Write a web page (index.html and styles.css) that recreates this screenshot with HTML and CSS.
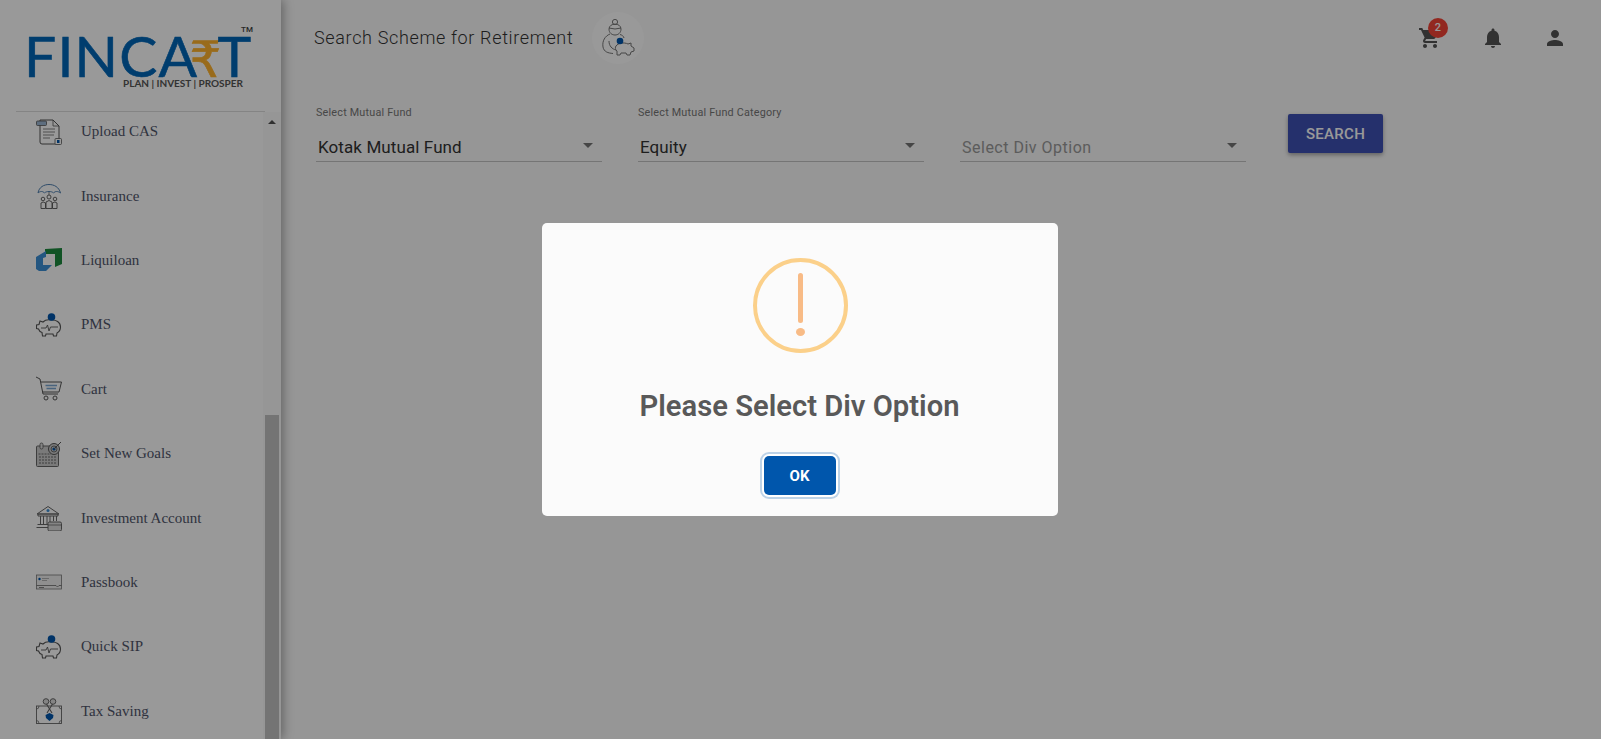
FILE: index.html
```html
<!DOCTYPE html>
<html>
<head>
  <title>Search Scheme for Retirement</title>
  <link rel="stylesheet" href="styles.css">
</head>
<body>
  <svg class="defs" width="0" height="0">
    <symbol id="piggy" viewBox="0 0 26 26">
      <path d="M4 9 L7 10 C9 8 12 7.500 15 8 C20 7.500 24.500 10 24.500 15 C24.500 18 23 20 21 21 L20.500 24 H17.500 L17 22 H10 L9.500 24 H6.500 L6 20.500 C4 20 3 18.500 2.500 17 L0.500 16.500 V13 L3 12.500 Z" fill="none" stroke="#555" stroke-width="1.100"/>
      <path d="M5 16 H10 L11.500 13 L13 19 L14.500 15 H22" fill="none" stroke="#555" stroke-width=".9"/>
      <circle cx="15.500" cy="5" r="3.800" fill="#0056ac"/>
    </symbol>
  </svg>

  <aside class="sidebar">
    <div class="logo">
      <div class="logo-word">FINCA<span class="rupee">₹</span>T</div>
      <span class="tm">TM</span>
      <div class="logo-tag">PLAN | INVEST | PROSPER</div>
    </div>
    <div class="divider"></div>
    <div class="side-body">
      <nav class="menu">
        <a class="menu-item">
          <svg class="menu-icon" viewBox="0 0 26 26">
            <path d="M4 1 H17 L23 7 V21 M20 25 H6 Q4 25 4 23 V1" fill="none" stroke="#555" stroke-width="1"/>
            <path d="M17 1 V7 H23" fill="none" stroke="#555" stroke-width=".8"/>
            <rect x="0.500" y="2" width="10" height="4.500" rx="1" fill="#9db8d4" stroke="#555" stroke-width=".8"/>
            <path d="M7 10 H19 M7 13 H19 M7 16 H18 M7 19 H14" stroke="#777" stroke-width=".9"/>
            <rect x="19" y="19.500" width="6.500" height="6" rx="1" fill="#fff" stroke="#555" stroke-width=".8"/>
            <rect x="21" y="21" width="2.500" height="3" fill="#0056ac"/>
          </svg>
          <span>Upload CAS</span>
        </a>
        <a class="menu-item">
          <svg class="menu-icon" viewBox="0 0 26 26">
            <path d="M2 10 C3 4 8 1.500 13 1.500 C18 1.500 23 4 24.500 10 C22 8 19 8 17.500 10 C16 8 10 8 8.500 10 C7 8 4 8 2 10 Z" fill="none" stroke="#4f7fb0" stroke-width="1"/>
            <path d="M13 9 V12" stroke="#666" stroke-width=".8"/>
            <circle cx="13" cy="14" r="2" fill="none" stroke="#555" stroke-width=".9"/>
            <circle cx="7" cy="16" r="1.800" fill="none" stroke="#555" stroke-width=".9"/>
            <circle cx="19" cy="16" r="1.800" fill="none" stroke="#555" stroke-width=".9"/>
            <path d="M10 25.500 V19 Q13 16 16 19 V25.500 Z M5 25.500 V20 Q7 18 9.500 20 V25.500 Z M16.500 25.500 V20 Q19 18 21 20 V25.500 Z" fill="none" stroke="#555" stroke-width=".9"/>
          </svg>
          <span>Insurance</span>
        </a>
        <a class="menu-item">
          <svg class="menu-icon" viewBox="0 0 26 26">
            <path d="M9 2 L26 1 V17 L19 20 V7 H9 Z" fill="#1d8a3e"/>
            <path d="M0 10 L10 4 V10 L7 11 V18 H16 L10 24 H3 L0 22 Z" fill="#3c8fd6"/>
          </svg>
          <span>Liquiloan</span>
        </a>
        <a class="menu-item">
          <svg class="menu-icon"><use href="#piggy"/></svg>
          <span>PMS</span>
        </a>
        <a class="menu-item">
          <svg class="menu-icon" viewBox="0 0 26 26">
            <path d="M0 1 L4 3 L7 18 H22 M5 6 H25.500 L23 16 H6.500" fill="none" stroke="#555" stroke-width="1"/>
            <path d="M9.500 9.500 H21 M10.500 12.500 H20" stroke="#7aa5d0" stroke-width="1.300"/>
            <circle cx="10" cy="22" r="2" fill="none" stroke="#555"/>
            <circle cx="19" cy="22" r="2" fill="none" stroke="#555"/>
          </svg>
          <span>Cart</span>
        </a>
        <a class="menu-item">
          <svg class="menu-icon" viewBox="0 0 26 26">
            <rect x="0.500" y="5" width="22" height="20.500" rx="1" fill="#ccc" stroke="#666"/>
            <path d="M2.500 13 H15 M3 16 H20 M3 19 H20 M3 22 H20" stroke="#666" stroke-width="1.200" stroke-dasharray="2 1"/>
            <rect x="4" y="2" width="3" height="6" rx="1.500" fill="#ddd" stroke="#555" stroke-width=".8"/>
            <circle cx="18" cy="8" r="5.500" fill="#ccc" stroke="#555"/>
            <circle cx="18" cy="8" r="3" fill="none" stroke="#555" stroke-width=".8"/>
            <circle cx="18" cy="8" r="1.600" fill="#0056ac"/>
            <path d="M18 8 L25 1" stroke="#555"/>
          </svg>
          <span>Set New Goals</span>
        </a>
        <a class="menu-item">
          <svg class="menu-icon" viewBox="0 0 26 26">
            <path d="M1 9 L12 1.500 L23 9 Z M2 9 H22 V11 H2 Z" fill="none" stroke="#666"/>
            <circle cx="12" cy="5.500" r="1.500" fill="#3c8fd6"/>
            <path d="M4.500 11 V19 M7.500 11 V19 M11 11 V19 M14 11 V19 M17.500 11 V16 M20.500 11 V16" stroke="#666"/>
            <path d="M1.500 19.500 H12 M0.500 22.500 H12" stroke="#666"/>
            <rect x="12" y="17" width="13.500" height="9" rx="1.500" fill="#ddd" stroke="#666"/>
            <path d="M12 20 H25.500" stroke="#666" stroke-width=".8"/>
          </svg>
          <span>Investment Account</span>
        </a>
        <a class="menu-item">
          <svg class="menu-icon" viewBox="0 0 26 26">
            <rect x="0.500" y="6" width="25" height="14" fill="#eee" stroke="#777" stroke-width=".8"/>
            <circle cx="3.500" cy="10" r="1.200" fill="#0056ac"/>
            <path d="M6 9.500 H13 M6 11.500 H11" stroke="#888" stroke-width=".6"/>
            <path d="M0.500 16.500 H20 L21.500 18 L23 16.500 H25.500 M3 18.500 H8" fill="none" stroke="#666" stroke-width=".8"/>
          </svg>
          <span>Passbook</span>
        </a>
        <a class="menu-item">
          <svg class="menu-icon"><use href="#piggy"/></svg>
          <span>Quick SIP</span>
        </a>
        <a class="menu-item">
          <svg class="menu-icon" viewBox="0 0 26 26">
            <rect x="0.500" y="8" width="25" height="17.500" fill="none" stroke="#666" stroke-width=".9"/>
            <path d="M0.500 11 Q3 11 3 8 M25.500 11 Q23 11 23 8 M0.500 22.500 Q3 22.500 3 25.500 M25.500 22.500 Q23 22.500 23 25.500" fill="none" stroke="#666" stroke-width=".8"/>
            <circle cx="10" cy="3.500" r="2.800" fill="#ddd" stroke="#666"/>
            <circle cx="17" cy="3.500" r="2.800" fill="#ddd" stroke="#666"/>
            <path d="M10.500 6 L16 15 M16.500 6 L11 15" stroke="#666" stroke-width="1.100"/>
            <path d="M9.500 17 L13.500 15 L17.500 17 L17 20 L13.500 23 L10 20 Z" fill="#0056ac"/>
          </svg>
          <span>Tax Saving</span>
        </a>
      </nav>
      <div class="scrollbar">
        <span class="scroll-up"></span>
        <div class="scroll-thumb"></div>
      </div>
    </div>
  </aside>

  <main class="content">
    <header class="topbar">
      <h1 class="page-title">Search Scheme for Retirement</h1>
      <div class="goal-badge">
        <svg width="34" height="38" viewBox="0 0 34 38">
          <circle cx="14" cy="3" r="2.600" fill="none" stroke="#777" stroke-width="1"/>
          <path d="M8 10 C8 3.500 20 3.500 20 10 C20 14 17 16 14 16 C11 16 8 14 8 10 Z M8 9 Q14 11 20 9" fill="none" stroke="#777" stroke-width="1"/>
          <path d="M9 15 C4 17 1 22 2 28 C3 33 7 34 12 34.500 M8 22 C8 27 11 30 15 31 M19 15.500 C21 16 22.500 17 23 19" fill="none" stroke="#777" stroke-width="1"/>
          <path d="M15 27 C17 24 23 23 27 25 L30 24 V27 L33 29 V32 L30 33 L29 36 H26 L25 34 H20 L19 36 H16 L16 32 C14 31 14 28 15 27 Z" fill="none" stroke="#777" stroke-width="1"/>
          <circle cx="19" cy="22" r="3.300" fill="#0056ac"/>
        </svg>
      </div>
      <div class="top-actions">
        <div class="cart-wrap">
          <svg class="top-icon" viewBox="0 0 24 24"><path d="M7 18c-1.100 0-1.990.9-1.990 2S5.900 22 7 22s2-.9 2-2-.9-2-2-2zM1 2v2h2l3.600 7.590-1.350 2.450c-.16.280-.25.610-.25.960 0 1.100.9 2 2 2h12v-2H7.420c-.14 0-.25-.11-.25-.25l.03-.12.9-1.630h7.450c.75 0 1.410-.41 1.750-1.030l3.580-6.490c.08-.14.120-.31.120-.48 0-.55-.45-1-1-1H5.210l-.94-2H1zm16 16c-1.100 0-1.990.9-1.990 2s.89 2 1.990 2 2-.9 2-2-.9-2-2-2z"/></svg>
          <span class="badge">2</span>
        </div>
        <svg class="top-icon" viewBox="0 0 24 24"><path d="M12 22c1.100 0 2-.9 2-2h-4c0 1.100.89 2 2 2zm6-6v-5c0-3.070-1.640-5.640-4.500-6.320V4c0-.83-.67-1.500-1.500-1.500s-1.500.67-1.500 1.500v.68C7.630 5.360 6 7.920 6 11v5l-2 2v1h16v-1l-2-2z"/></svg>
        <svg class="top-icon" viewBox="0 0 24 24"><path d="M12 12c2.210 0 4-1.790 4-4s-1.790-4-4-4-4 1.790-4 4 1.790 4 4 4zm0 2c-2.670 0-8 1.340-8 4v2h16v-2c0-2.660-5.330-4-8-4z"/></svg>
      </div>
    </header>

    <section class="filters">
      <div class="field">
        <label class="field-label">Select Mutual Fund</label>
        <div class="select"><span>Kotak Mutual Fund</span><i class="caret"></i></div>
      </div>
      <div class="field">
        <label class="field-label">Select Mutual Fund Category</label>
        <div class="select"><span>Equity</span><i class="caret"></i></div>
      </div>
      <div class="field">
        <label class="field-label"></label>
        <div class="select placeholder"><span>Select Div Option</span><i class="caret"></i></div>
      </div>
      <button class="search-btn">SEARCH</button>
    </section>
  </main>

  <div class="overlay">
    <div class="modal">
      <div class="warn-icon"><span class="warn-line"></span><span class="warn-dot"></span></div>
      <h2 class="modal-title">Please Select Div Option</h2>
      <button class="ok-btn">OK</button>
    </div>
  </div>
</body>
</html>
```

FILE: styles.css
```css
* {
  box-sizing: border-box;
}
html, body {
  margin: 0;
  height: 100%;
  overflow: hidden;
}
body {
  display: flex;
  font-family: Roboto, sans-serif;
  background-color: #fafafa;
}
.defs {
  position: absolute;
}

/* sidebar */
.sidebar {
  width: 281px;
  height: 100vh;
  flex-shrink: 0;
  display: flex;
  flex-direction: column;
  background: #fff;
  box-shadow: 2px 0 10px rgba(0, 0, 0, 0.35);
  position: relative;
}
.logo {
  height: 111px;
  padding: 34px 0 0 24px;
  position: relative;
}
.logo-word {
  font-family: Lato, sans-serif;
  font-size: 57px;
  line-height: 42px;
  letter-spacing: 1.200px;
  color: #0067b8;
  -webkit-text-stroke: 0.6px #0067b8;
  white-space: nowrap;
}
.rupee {
  font-family: "DejaVu Sans", sans-serif;
  font-size: 50px;
  line-height: 0;
  color: #ffb32e;
  -webkit-text-stroke: 0.6px #ffb32e;
  margin: 0 -5px 0 -9px;
}
.tm {
  position: absolute;
  left: 241px;
  top: 25px;
  font-size: 8px;
  font-weight: 500;
  line-height: 10px;
  color: #444;
}
.logo-tag {
  margin: 1px 0 0 99px;
  font-family: Lato, sans-serif;
  font-size: 10px;
  font-weight: 700;
  line-height: 12px;
  color: #555;
  white-space: nowrap;
}
.divider {
  height: 1px;
  margin: 0 16px;
  background: #ddd;
}
.side-body {
  flex: 1;
  display: flex;
  min-height: 0;
}
.menu {
  flex: 1;
  overflow: hidden;
  padding: 0 0 0 36px;
}
.menu-item {
  display: flex;
  align-items: center;
  gap: 19px;
  height: 64.400px;
  font-family: "Liberation Serif", serif;
  font-size: 15px;
  color: #50556a;
}
.menu-item:first-child {
  margin-top: -12.500px;
}
.menu-icon {
  width: 26px;
  height: 26px;
  flex-shrink: 0;
}
.scrollbar {
  width: 18px;
  flex-shrink: 0;
  padding: 0 2px;
  background: #fbfbfb;
  display: flex;
  flex-direction: column;
  align-items: center;
  justify-content: space-between;
  overflow: hidden;
}
.scroll-up {
  margin-top: 8px;
  border-left: 4px solid transparent;
  border-right: 4px solid transparent;
  border-bottom: 4px solid #505050;
}
.scroll-thumb {
  width: 14px;
  height: 324px;
  background: #c1c1c1;
  flex-shrink: 0;
}

/* main area */
.content {
  flex: 1;
  min-width: 0;
}
.topbar {
  height: 76px;
  display: flex;
  align-items: center;
  padding: 0 34px 0 33px;
}
.page-title {
  margin: 0 0 2px;
  font-size: 18px;
  font-weight: 300;
  letter-spacing: 0.650px;
  color: #333;
}
.goal-badge {
  width: 52px;
  height: 52px;
  margin-left: 19px;
  border-radius: 50%;
  background: #fff;
  display: flex;
  align-items: center;
  justify-content: center;
}
.top-actions {
  margin-left: auto;
  display: flex;
  align-items: center;
  gap: 38px;
}
.top-icon {
  display: block;
  width: 24px;
  height: 24px;
  fill: #545454;
}
.cart-wrap {
  position: relative;
  margin-right: 1px;
}
.badge {
  position: absolute;
  top: -8px;
  left: 10px;
  width: 20px;
  height: 20px;
  border-radius: 50%;
  background: #f44336;
  color: #fff;
  font-size: 11px;
  font-weight: 500;
  line-height: 20px;
  text-align: center;
}
.filters {
  display: flex;
  align-items: flex-start;
  gap: 36px;
  padding: 30px 0 0 35px;
}
.field {
  width: 286px;
}
.field-label {
  display: block;
  height: 14px;
  font-size: 10.800px;
  line-height: 14px;
  letter-spacing: 0.200px;
  color: #777;
}
.select {
  height: 30px;
  margin-top: 12px;
  padding: 1px 9px 0 2px;
  display: flex;
  align-items: center;
  justify-content: space-between;
  border-bottom: 1px solid #c4c4c4;
  font-size: 17px;
  letter-spacing: 0.100px;
  color: #333;
}
.placeholder {
  font-size: 16px;
  letter-spacing: 0.500px;
  color: #999;
}
.caret {
  width: 0;
  height: 0;
  margin-top: -3px;
  border-left: 5px solid transparent;
  border-right: 5px solid transparent;
  border-top: 5px solid #757575;
}
.search-btn {
  height: 39px;
  width: 95px;
  margin: 8px 0 0 6px;
  border: 0;
  border-radius: 2px;
  background: #3f51b5;
  color: #fff;
  font-family: Roboto, sans-serif;
  font-size: 15px;
  font-weight: 500;
  letter-spacing: 0.300px;
  box-shadow: 0 2px 4px rgba(0, 0, 0, 0.35);
}

/* alert */
.overlay {
  position: fixed;
  inset: 0;
  padding-right: 2px;
  background: rgba(0, 0, 0, 0.4);
  display: flex;
  align-items: center;
  justify-content: center;
}
.modal {
  width: 516px;
  height: 293px;
  padding-top: 35px;
  border-radius: 5px;
  background: #fbfbfb;
  display: flex;
  flex-direction: column;
  align-items: center;
}
.warn-icon {
  width: 95px;
  height: 95px;
  margin-left: 2px;
  border: 4px solid #fbd08a;
  border-radius: 50%;
  display: flex;
  flex-direction: column;
  align-items: center;
  padding-top: 11px;
}
.warn-line {
  width: 5px;
  height: 50px;
  border-radius: 3px;
  background: #f8bb86;
}
.warn-dot {
  width: 9px;
  height: 8px;
  margin-top: 5px;
  border-radius: 50%;
  background: #f8bb86;
}
.modal-title {
  margin: 33px 0 0;
  font-size: 29.200px;
  font-weight: 600;
  line-height: 40px;
  color: #595959;
}
.ok-btn {
  width: 72px;
  height: 39px;
  margin-top: 30px;
  border: 0;
  border-radius: 5px;
  background: #0056ac;
  color: #fff;
  font-family: Roboto, sans-serif;
  font-size: 15px;
  font-weight: 700;
  box-shadow: 0 0 0 2px #fff, 0 0 0 4px rgba(0, 86, 172, 0.25);
}
```
